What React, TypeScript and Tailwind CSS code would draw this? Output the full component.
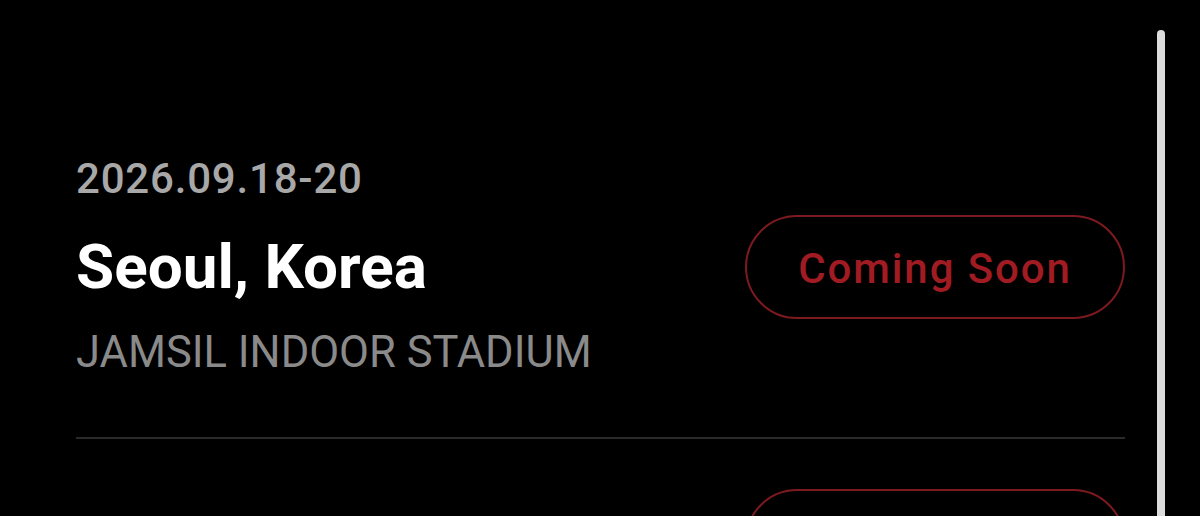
import React from "react";

type Show = { date?: string; city: string; venue: string };

const shows: Show[] = [
  { date: "2026.09.18-20", city: "Seoul, Korea", venue: "JAMSIL INDOOR STADIUM" },
  { city: "Seoul, Korea", venue: "JAMSIL INDOOR STADIUM" },
];

function Item({ show, first }: { show: Show; first: boolean }) {
  return (
    <div className={first ? "pb-[60px]" : "pt-[50px] pb-[60px]"}>
      {show.date && (
        <div className="text-[42px] leading-[48px] font-medium text-[#a8a8a8] tracking-[0.8px] mb-[12px]">
          {show.date}
        </div>
      )}
      <div className="flex items-center justify-between">
        <div className="text-[62px] leading-[72px] font-bold text-white">{show.city}</div>
        <div className="w-[380px] h-[104px] rounded-full border-2 border-[#7d1a1f] flex items-center justify-center pt-[2px] text-[42px] font-medium text-[#a11b22] tracking-[1.9px]">
          Coming Soon
        </div>
      </div>
      <div className="mt-[10px] text-[43.5px] leading-[48px] text-[#8a8a8a]">{show.venue}</div>
    </div>
  );
}

export default function App() {
  return (
    <div
      className="relative w-[1200px] h-[516px] overflow-hidden bg-black"
      style={{ fontFamily: "Roboto, 'Noto Sans', sans-serif" }}
    >
      <div className="pl-[76px] pr-[75px] pt-[155px]">
        {shows.map((s, i) => (
          <React.Fragment key={i}>
            {i > 0 && <div className="h-[2px] bg-[#2a2a2a]" />}
            <Item show={s} first={i === 0} />
          </React.Fragment>
        ))}
      </div>
      <div className="absolute left-[1157px] top-[30px] w-[8px] h-[500px] rounded-t-full bg-[#dcdcdc]" />
    </div>
  );
}
